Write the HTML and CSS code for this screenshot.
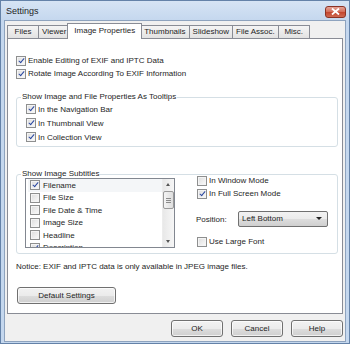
FILE: index.html
```html
<!DOCTYPE html>
<html lang="en">
<head>
    <meta charset="UTF-8">
    <title>Settings</title>
    <link rel="stylesheet" href="styles.css">
</head>
<body>
    <div class="window">
        <div class="titlebar">
            <span class="title">Settings</span>
            <span class="close">
                <svg width="9" height="7" viewBox="0 0 9 7"><path d="M1 0.5 L8 6.5 M8 0.5 L1 6.5" stroke="#fff" stroke-width="1.8"/></svg>
            </span>
        </div>

        <div class="client">
            <div class="tabs">
                <div class="tab">Files</div>
                <div class="tab">Viewer</div>
                <div class="tab active">Image Properties</div>
                <div class="tab">Thumbnails</div>
                <div class="tab">Slideshow</div>
                <div class="tab">File Assoc.</div>
                <div class="tab">Misc.</div>
            </div>

            <div class="panel">
                <div class="row"><span class="check on"></span>Enable Editing of EXIF and IPTC Data</div>
                <div class="row"><span class="check on"></span>Rotate Image According To EXIF Information</div>

                <fieldset class="group tips">
                    <legend>Show Image and File Properties As Tooltips</legend>
                    <div class="row tall"><span class="check on"></span>In the Navigation Bar</div>
                    <div class="row tall"><span class="check on"></span>In Thumbnail View</div>
                    <div class="row tall"><span class="check on"></span>In Collection View</div>
                </fieldset>

                <fieldset class="group subs">
                    <legend>Show Image Subtitles</legend>
                    <div class="subs-body">
                        <div class="listbox">
                            <div class="items">
                                <div class="item focus"><span class="check on"></span>Filename</div>
                                <div class="item"><span class="check"></span>File Size</div>
                                <div class="item"><span class="check"></span>File Date &amp; Time</div>
                                <div class="item"><span class="check"></span>Image Size</div>
                                <div class="item"><span class="check"></span>Headline</div>
                                <div class="item"><span class="check on"></span>Description</div>
                            </div>
                            <div class="scrollbar">
                                <span class="arrow up"></span>
                                <span class="track">
                                    <span class="thumb"><i></i><i></i><i></i></span>
                                </span>
                                <span class="arrow down"></span>
                            </div>
                        </div>

                        <div class="subs-opts">
                            <div class="row"><span class="check"></span>In Window Mode</div>
                            <div class="row"><span class="check on"></span>In Full Screen Mode</div>
                            <div class="position">
                                <span class="label">Position:</span>
                                <span class="select">Left Bottom<span class="caret"></span></span>
                            </div>
                            <div class="row large"><span class="check"></span>Use Large Font</div>
                        </div>
                    </div>
                </fieldset>

                <p class="notice">Notice: EXIF and IPTC data is only available in JPEG image files.</p>

                <button class="btn default-btn">Default Settings</button>
            </div>

            <div class="actions">
                <button class="btn">OK</button>
                <button class="btn">Cancel</button>
                <button class="btn">Help</button>
            </div>
        </div>
    </div>
</body>
</html>
```

FILE: styles.css
```css
:root {
    --frame: #c4d7ee;
    --client: #f0f0f0;
    --tab-border: #898c95;
    --group-border: #d5dfe5;
    --text: #1e1e1e;
}

* {
    box-sizing: border-box;
}

body {
    margin: 0;
    font-family: 'Liberation Sans', Arial, sans-serif;
    font-size: 8px;
    color: var(--text);
    background: #fff;
}

.window {
    width: 350px;
    height: 344px;
    border: 1px solid #6482a8;
    background: linear-gradient(#d6e4f4, var(--frame) 20px);
    padding: 0 3px 1px;
    display: flex;
    flex-direction: column;
}

.titlebar {
    height: 19px;
    display: flex;
    align-items: center;
    justify-content: space-between;
    padding: 0 0 0 2px;
}

.title {
    font-size: 9px;
    margin-top: 1px;
}

.close {
    width: 21px;
    height: 12px;
    margin-top: 2px;
    border: 1px solid #8b3325;
    border-radius: 3px;
    background: linear-gradient(#e5a497, #d26a56 50%, #c2442d 51%, #cf6a52);
    display: flex;
    align-items: center;
    justify-content: center;
}

.close svg {
    display: block;
}

.client {
    flex: 1;
    border: 1px solid #8ea3be;
    background: var(--client);
    padding: 2px 2px 3px 2px;
    display: flex;
    flex-direction: column;
}

/* tab strip */
.tabs {
    height: 15px;
    display: flex;
    align-items: flex-end;
}

.tab {
    height: 13px;
    min-width: 32px;
    padding: 0 3px;
    border: 1px solid var(--tab-border);
    border-bottom: none;
    margin-left: -1px;
    background: linear-gradient(#f4f4f4, #e2e2e2);
    text-align: center;
    line-height: 12px;
    white-space: nowrap;
}

.tab:first-child {
    margin-left: 0;
}

.tab.active {
    height: 16px;
    margin: 0 -2px -1px -3px;
    padding: 0 6px;
    background: #fff;
    position: relative;
    z-index: 1;
    line-height: 13px;
}

.tab.active + .tab {
    margin-left: 0;
}

.panel {
    height: 276px;
    border: 1px solid var(--tab-border);
    background: #fff;
    padding: 15px 4px 0 8px;
}

.row {
    height: 13px;
    display: flex;
    align-items: center;
    white-space: nowrap;
}

.row.tall {
    height: 14px;
}

.check {
    width: 10px;
    height: 10px;
    flex: none;
    margin-right: 2px;
    border: 1px solid #8e8f8f;
    background: linear-gradient(135deg, #dcdcdc, #fbfbfb);
    box-shadow: inset 0 0 0 1px #f4f4f4;
    position: relative;
}

.check.on::after {
    content: "";
    position: absolute;
    left: 3px;
    top: 0px;
    width: 2px;
    height: 5px;
    border: solid #2a47a0;
    border-width: 0 1.5px 1.5px 0;
    transform: rotate(40deg);
}

/* group boxes */
.group {
    margin: 0;
    border: 1px solid var(--group-border);
    border-radius: 3px;
    padding: 0 0 2px 4px;
}

.group legend {
    padding: 0 1px;
    line-height: 10px;
}

.tips {
    margin-top: 12px;
}

.tips .row {
    padding-left: 5px;
}

.subs {
    margin-top: 22px;
    padding-bottom: 5px;
}

.subs-body {
    display: flex;
    margin-top: -1px;
    padding-left: 4px;
}

.listbox {
    width: 150px;
    height: 70px;
    border: 1px solid #828790;
    display: flex;
    overflow: hidden;
}

.items {
    flex: 1;
    padding: 0 0 0 2px;
    overflow: hidden;
}

.item {
    height: 12.5px;
    display: flex;
    align-items: center;
    padding-left: 2px;
    white-space: nowrap;
}

.item .check {
    margin-right: 3px;
}

.item.focus {
    background: #f4f6f8;
}

.scrollbar {
    width: 12px;
    flex: none;
    display: flex;
    flex-direction: column;
    background: linear-gradient(90deg, #e8e8e8, #f6f6f6);
    border-left: 1px solid #ececec;
}

.arrow {
    height: 11px;
    position: relative;
}

.arrow::after {
    content: "";
    position: absolute;
    left: 3px;
    border-left: 2.5px solid transparent;
    border-right: 2.5px solid transparent;
}

.arrow.up::after {
    top: 4px;
    border-bottom: 3px solid #555;
}

.arrow.down::after {
    top: 4px;
    border-top: 3px solid #555;
}

.track {
    flex: 1;
}

.thumb {
    display: flex;
    flex-direction: column;
    align-items: center;
    justify-content: center;
    gap: 1px;
    height: 18px;
    margin-top: 1px;
    border: 1px solid #9a9a9a;
    border-radius: 2px;
    background: linear-gradient(90deg, #f4f4f4, #dedede);
}

.thumb i {
    width: 5px;
    height: 1px;
    background: #8b8b8b;
}

.subs-opts {
    margin: -4px 0 0 21px;
}

.subs-opts .row {
    padding-left: 1px;
}

.position {
    display: flex;
    align-items: center;
    margin-top: 11px;
    height: 16px;
}

.label {
    width: 42px;
}

.select {
    width: 90px;
    height: 16px;
    border: 1px solid #707070;
    border-radius: 2px;
    background: linear-gradient(#f2f2f2, #ebebeb 50%, #dddddd 51%, #cfcfcf);
    padding: 0 0 0 3px;
    line-height: 14px;
    position: relative;
}

.caret {
    position: absolute;
    right: 5px;
    top: 5px;
    border-left: 3px solid transparent;
    border-right: 3px solid transparent;
    border-top: 3px solid #222;
}

.row.large {
    margin-top: 8px;
}

.notice {
    margin: 7px 0 0;
    line-height: 12px;
}

/* buttons */
.btn {
    height: 17px;
    padding: 0;
    font-family: inherit;
    font-size: 8px;
    color: var(--text);
    border: 1px solid #707070;
    border-radius: 3px;
    background: linear-gradient(#f2f2f2, #ebebeb 50%, #dddddd 51%, #cfcfcf);
    box-shadow: inset 0 0 0 1px rgba(255, 255, 255, 0.7);
}

.default-btn {
    width: 99px;
    margin: 14px 0 0 1px;
    display: block;
}

.actions {
    display: flex;
    justify-content: flex-end;
    gap: 8px;
    margin-top: 6px;
}

.actions .btn {
    width: 52px;
}
```
